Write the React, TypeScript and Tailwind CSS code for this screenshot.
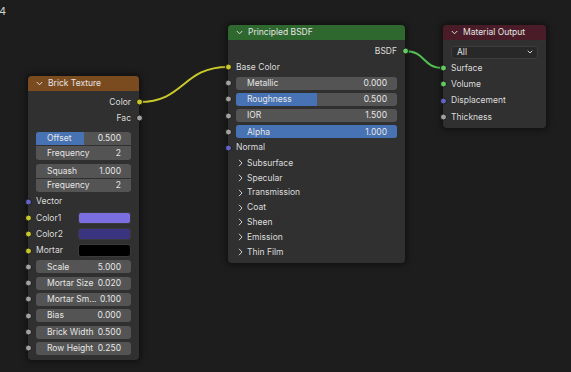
import React from "react";

type SockColor = "yellow" | "gray" | "purple" | "green";

const sockClass: Record<SockColor, string> = {
  yellow: "bg-[#c7c729]",
  gray: "bg-[#a1a1a1]",
  purple: "bg-[#6363c7]",
  green: "bg-[#63c763]",
};

function Socket({ color, side }: { color: SockColor; side: "left" | "right" }) {
  return (
    <span
      className={
        "absolute top-1/2 -translate-y-1/2 w-[7px] h-[7px] rounded-full border border-[#1a1a1a] " +
        sockClass[color] +
        (side === "left" ? " left-[-3.5px]" : " right-[-3.5px]")
      }
    />
  );
}

function Chevron() {
  return (
    <svg width="7" height="5" viewBox="0 0 7 5" className="shrink-0">
      <polyline points="0.8,1 3.5,3.8 6.2,1" fill="none" stroke="#d8d8d8" strokeWidth="1" />
    </svg>
  );
}

function ChevronRight() {
  return (
    <svg width="5" height="8" viewBox="0 0 5 8" className="shrink-0">
      <polyline points="1,0.8 4,4 1,7.2" fill="none" stroke="#cfcfcf" strokeWidth="1" />
    </svg>
  );
}

function Header({ title, bg }: { title: string; bg: string }) {
  return (
    <div className={"h-[15px] rounded-t-[4px] flex items-center pl-[8px] gap-[5px] text-[#e4e4e4] " + bg}>
      <Chevron />
      <span className="leading-none">{title}</span>
    </div>
  );
}

function Field({
  label,
  value,
  fill,
  sock,
  h = "h-[16.3px]",
}: {
  label: string;
  value: string;
  fill?: "half" | "full";
  sock?: SockColor;
  h?: string;
}) {
  return (
    <div className={"relative flex items-center px-[8px] " + h}>
      {sock && <Socket color={sock} side="left" />}
      <div className="relative h-[13px] flex-1 rounded-[3px] bg-[#545454] overflow-hidden flex items-center justify-between pl-[11px] pr-[10px] text-[#e6e6e6]">
        {fill === "half" && <div className="absolute left-0 top-0 bottom-0 w-1/2 bg-[#4772b3]" />}
        {fill === "full" && <div className="absolute inset-0 bg-[#4772b3]" />}
        <span className="relative leading-none whitespace-nowrap">{label}</span>
        <span className="relative leading-none">{value}</span>
      </div>
    </div>
  );
}

function GroupRow({ label, value, fill, top }: { label: string; value: string; fill?: boolean; top?: boolean }) {
  return (
    <div
      className={
        "relative h-[13.5px] bg-[#545454] overflow-hidden flex items-center justify-between pl-[11px] pr-[10px] text-[#e6e6e6] " +
        (top ? "rounded-t-[3px]" : "rounded-b-[3px]")
      }
    >
      {fill && <div className="absolute left-0 top-0 bottom-0 w-1/2 bg-[#4772b3]" />}
      <span className="relative leading-none">{label}</span>
      <span className="relative leading-none">{value}</span>
    </div>
  );
}

function OutRow({ label, sock, h = "h-[16.3px]" }: { label: string; sock: SockColor; h?: string }) {
  return (
    <div className={"relative flex items-center justify-end pr-[8px] " + h}>
      <span className="leading-none">{label}</span>
      <Socket color={sock} side="right" />
    </div>
  );
}

function InRow({ label, sock, h = "h-[16.3px]" }: { label: string; sock: SockColor; h?: string }) {
  return (
    <div className={"relative flex items-center pl-[8px] " + h}>
      <Socket color={sock} side="left" />
      <span className="leading-none">{label}</span>
    </div>
  );
}

function SwatchRow({ label, swatch }: { label: string; swatch: string }) {
  return (
    <div className="relative flex items-center pl-[8px] pr-[8px] h-[16.3px]">
      <Socket color="yellow" side="left" />
      <span className="leading-none flex-1">{label}</span>
      <div className={"w-[53px] h-[12.5px] rounded-[3px] border border-[#3a3a3a] " + swatch} />
    </div>
  );
}

function PanelRow({ label }: { label: string }) {
  return (
    <div className="flex items-center h-[14.9px] pl-[10px] gap-[4px]">
      <ChevronRight />
      <span className="leading-none">{label}</span>
    </div>
  );
}

function BrickNode() {
  return (
    <div className="absolute left-[28px] top-[76px] w-[111px] h-[284px] rounded-[4px] bg-[#303030] shadow-[0_0_6px_2px_rgba(0,0,0,0.45)] flex flex-col">
      <Header title="Brick Texture" bg="bg-[#7b4b20]" />
      <div className="pt-[3px] flex flex-col">
        <OutRow label="Color" sock="yellow" />
        <OutRow label="Fac" sock="gray" />
        <div className="mt-[5px] mx-[8px] flex flex-col gap-[1px]">
          <GroupRow label="Offset" value="0.500" fill top />
          <GroupRow label="Frequency" value="2" />
        </div>
        <div className="mt-[4.5px] mx-[8px] flex flex-col gap-[1px]">
          <GroupRow label="Squash" value="1.000" top />
          <GroupRow label="Frequency" value="2" />
        </div>
        <div className="mt-[1.4px]">
          <InRow label="Vector" sock="purple" />
        </div>
        <SwatchRow label="Color1" swatch="bg-[#7b6ee0]" />
        <SwatchRow label="Color2" swatch="bg-[#3b3480]" />
        <SwatchRow label="Mortar" swatch="bg-[#000000]" />
        <Field label="Scale" value="5.000" sock="gray" />
        <Field label="Mortar Size" value="0.020" sock="gray" />
        <Field label="Mortar Sm..." value="0.100" sock="gray" />
        <Field label="Bias" value="0.000" sock="gray" />
        <Field label="Brick Width" value="0.500" sock="gray" />
        <Field label="Row Height" value="0.250" sock="gray" />
      </div>
    </div>
  );
}

function PrincipledNode() {
  return (
    <div className="absolute left-[228px] top-[25px] w-[177px] h-[238px] rounded-[4px] bg-[#303030] shadow-[0_0_6px_2px_rgba(0,0,0,0.45)] flex flex-col">
      <Header title="Principled BSDF" bg="bg-[#2e682e]" />
      <div className="pt-[2.8px] flex flex-col">
        <OutRow label="BSDF" sock="green" h="h-[16.2px]" />
        <InRow label="Base Color" sock="yellow" h="h-[16.2px]" />
        <Field label="Metallic" value="0.000" sock="gray" h="h-[16.2px]" />
        <Field label="Roughness" value="0.500" sock="gray" fill="half" h="h-[16.2px]" />
        <Field label="IOR" value="1.500" sock="gray" h="h-[16.2px]" />
        <Field label="Alpha" value="1.000" sock="gray" fill="full" h="h-[16.2px]" />
        <InRow label="Normal" sock="purple" h="h-[15.5px]" />
        <PanelRow label="Subsurface" />
        <PanelRow label="Specular" />
        <PanelRow label="Transmission" />
        <PanelRow label="Coat" />
        <PanelRow label="Sheen" />
        <PanelRow label="Emission" />
        <PanelRow label="Thin Film" />
      </div>
    </div>
  );
}

function OutputNode() {
  return (
    <div className="absolute left-[443px] top-[25px] w-[103px] h-[103px] rounded-[4px] bg-[#303030] shadow-[0_0_6px_2px_rgba(0,0,0,0.45)] flex flex-col">
      <Header title="Material Output" bg="bg-[#4a1c28]" />
      <div className="mt-[5.5px] mx-[8px] h-[13.5px] rounded-[3px] bg-[#282828] border border-[#3c3c3c] flex items-center justify-between pl-[5px] pr-[4px] text-[#e0e0e0]">
        <span className="leading-none">All</span>
        <svg width="6" height="4" viewBox="0 0 6 4">
          <polyline points="0.7,0.7 3,3 5.3,0.7" fill="none" stroke="#d0d0d0" strokeWidth="1" />
        </svg>
      </div>
      <div className="mt-[1px] flex flex-col">
        <InRow label="Surface" sock="green" />
        <InRow label="Volume" sock="green" />
        <InRow label="Displacement" sock="purple" />
        <InRow label="Thickness" sock="gray" />
      </div>
    </div>
  );
}

export default function App() {
  return (
    <div className="relative w-[571px] h-[372px] bg-[#1d1d1d] overflow-hidden font-['Inter',sans-serif] text-[8.5px] text-[#dcdcdc]">
      <span className="absolute left-[-1px] top-[6px] text-[11px] leading-none text-[#d0d0d0]">4</span>
      <svg className="absolute left-0 top-0" width="571" height="372">
        <path d="M139 102 C 185 102, 182 67, 228 67" stroke="#c9c92a" strokeWidth="2" fill="none" />
        <path d="M405 51 C 426 51, 422 68, 443 68" stroke="#52c052" strokeWidth="2" fill="none" />
      </svg>
      <BrickNode />
      <PrincipledNode />
      <OutputNode />
    </div>
  );
}
